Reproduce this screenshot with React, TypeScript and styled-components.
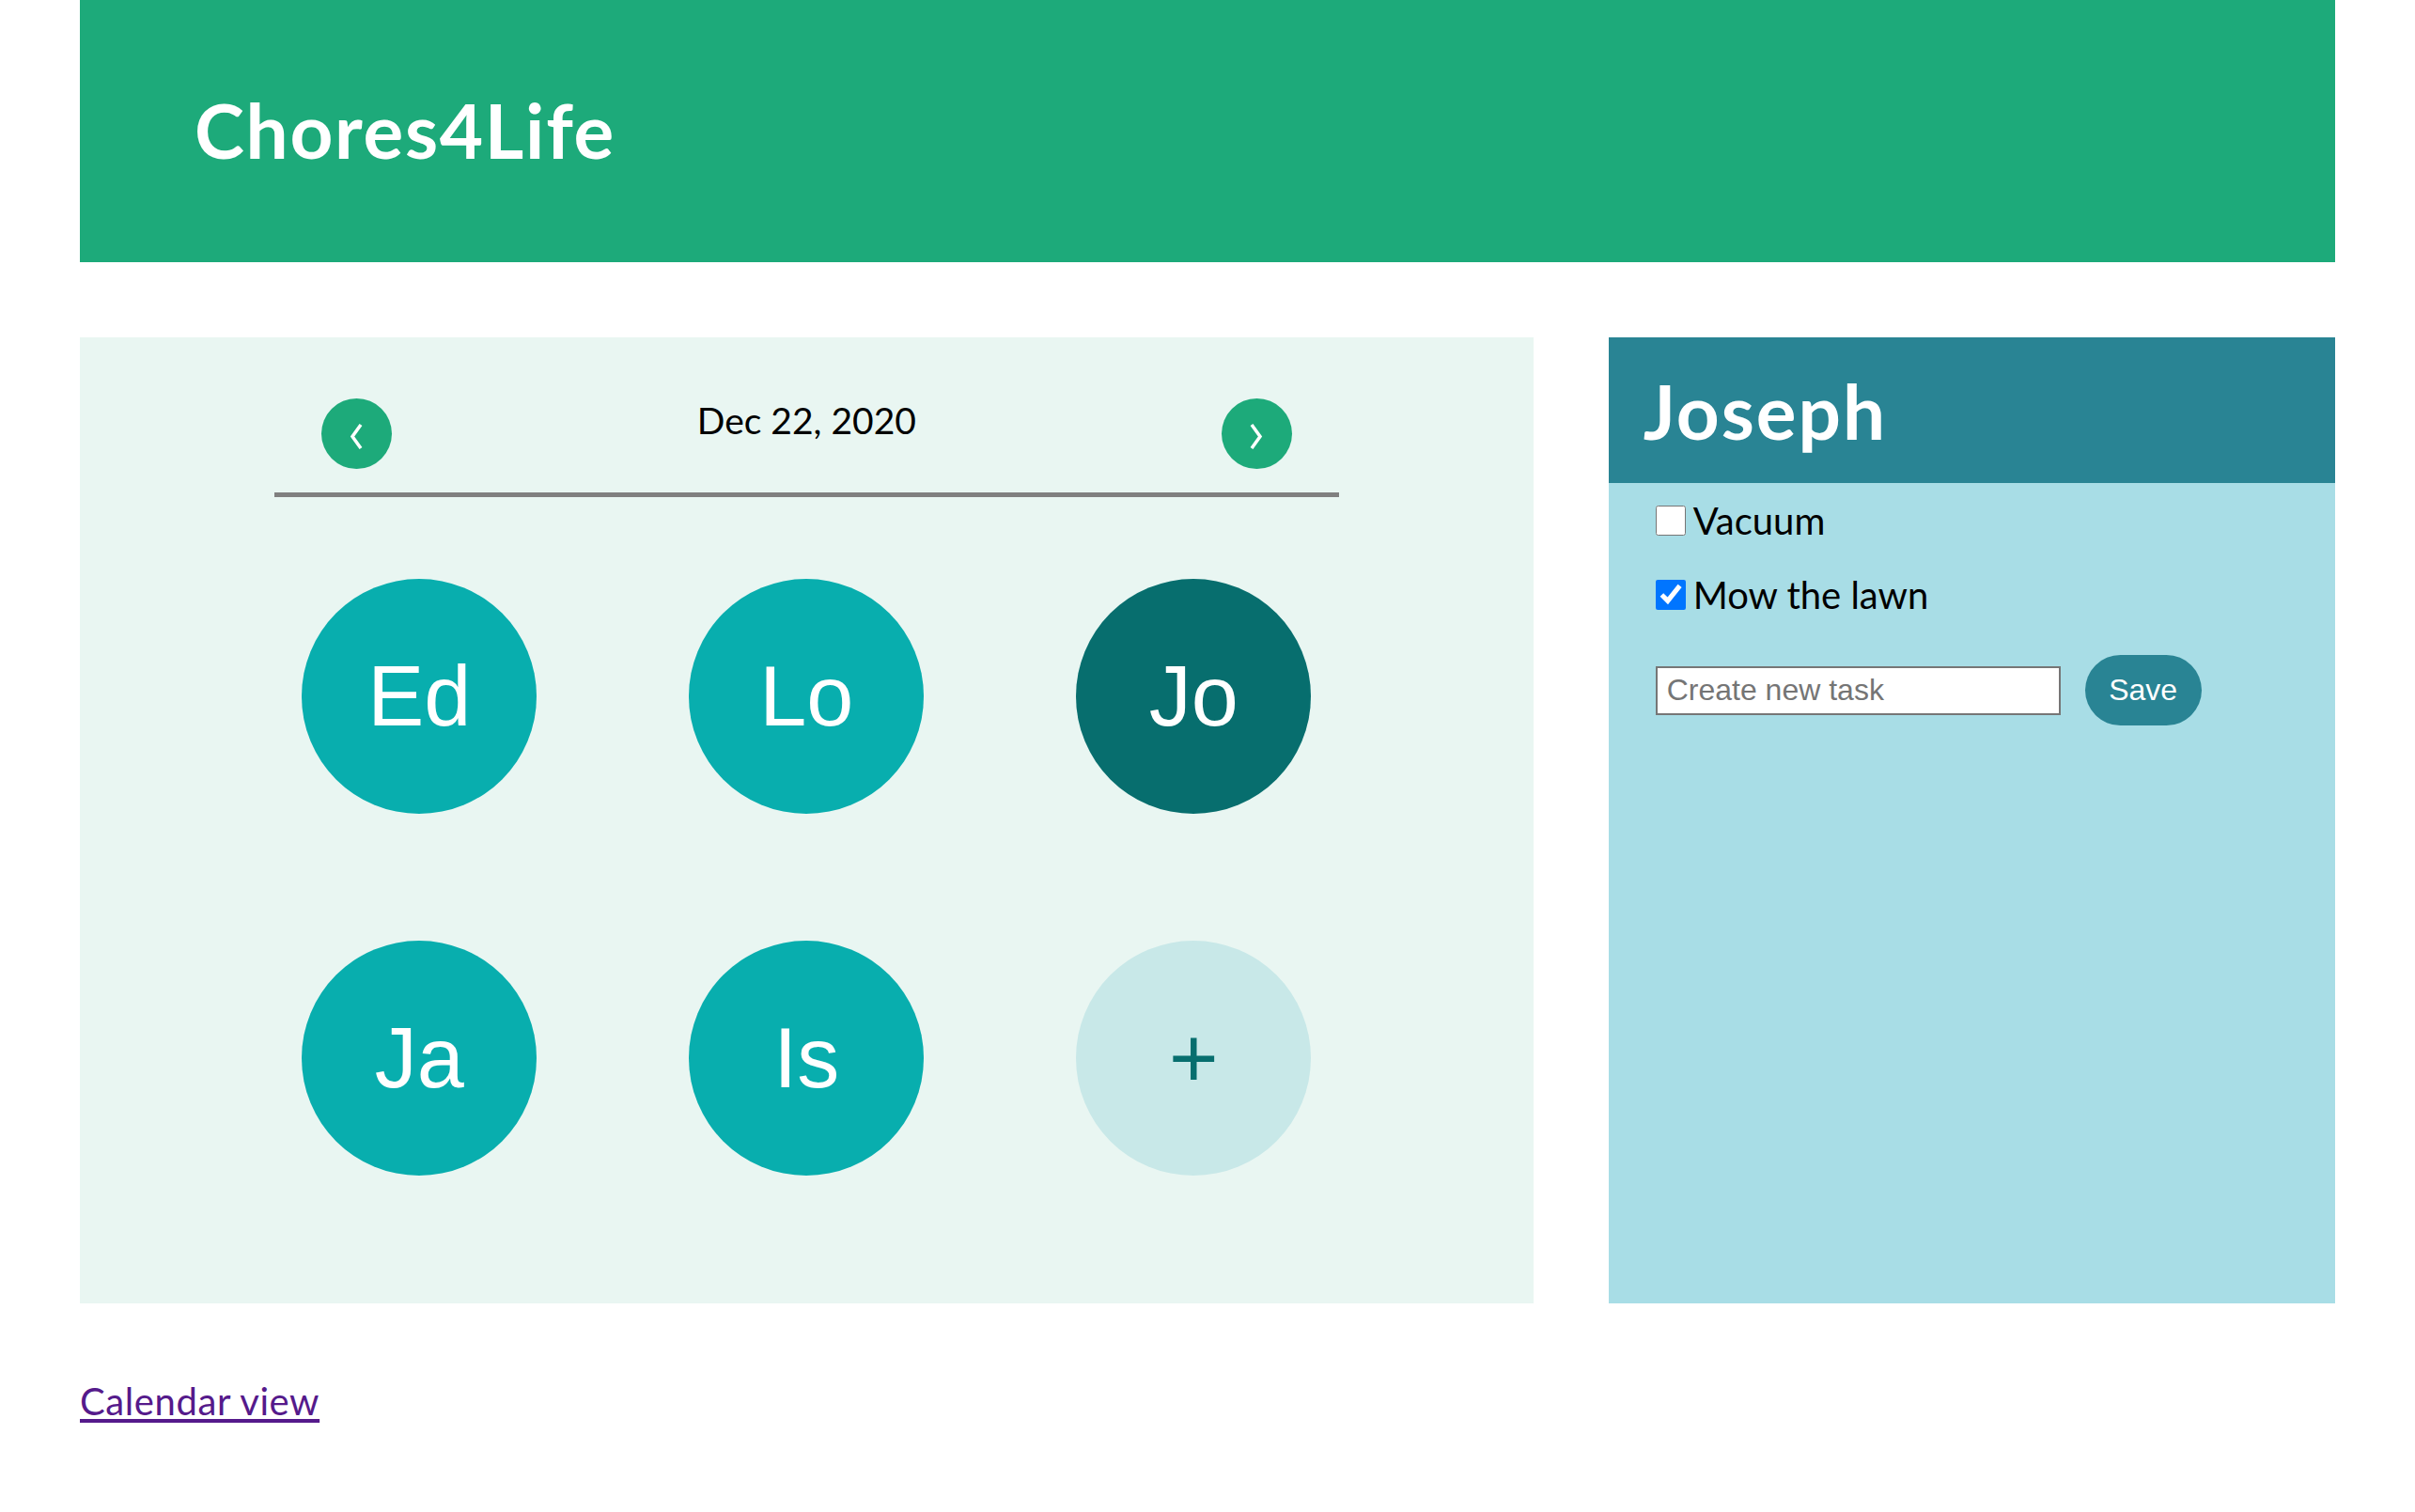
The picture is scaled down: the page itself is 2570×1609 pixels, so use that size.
import React from 'react';
import styled, { createGlobalStyle } from 'styled-components';

const GlobalStyle = createGlobalStyle`
  html, body { margin: 0; padding: 0; background: #ffffff; }
  body { font-family: "Trebuchet MS", Lato, "DejaVu Sans", sans-serif; color: #000; }
  * { box-sizing: border-box; }
`;

const Page = styled.div`
  width: 2400px;
  margin: 0 auto;
`;

const Header = styled.header`
  height: 279px;
  background: #1daa7a;
  display: flex;
  align-items: center;
  padding-left: 122px;
`;

const Title = styled.h1`
  margin: 0 0 4px;
  font-size: 80px;
  font-weight: 700;
  color: #ffffff;
  line-height: 1;
  letter-spacing: 1.7px;
`;

const Main = styled.main`
  margin-top: 80px;
  display: grid;
  grid-template-columns: 2fr 1fr;
  column-gap: 80px;
`;

const DayPanel = styled.section`
  background: #e9f6f2;
  padding: 65px 0 136px;
  display: flex;
  flex-direction: column;
  align-items: center;
`;

const DateNav = styled.div`
  width: 1133px;
  padding: 0 50px 25px;
  display: flex;
  justify-content: space-between;
  align-items: flex-start;
  border-bottom: 5px solid #808080;
`;

const NavButton = styled.button`
  width: 75px;
  height: 75px;
  border-radius: 50%;
  border: none;
  padding: 6px 0 0;
  background: #1daa7a;
  display: flex;
  align-items: center;
  justify-content: center;
  cursor: pointer;
`;

const DateText = styled.div`
  font-size: 39px;
  line-height: 1;
  margin-top: 4px;
`;

const AvatarGrid = styled.div`
  margin-top: 87px;
  display: grid;
  grid-template-columns: repeat(3, 250px);
  column-gap: 162px;
  row-gap: 135px;
`;

const Avatar = styled.div<{ $bg: string; $fg: string }>`
  width: 250px;
  height: 250px;
  border-radius: 50%;
  background: ${(p) => p.$bg};
  color: ${(p) => p.$fg};
  display: flex;
  align-items: center;
  justify-content: center;
  font-family: "Liberation Sans", Arial, sans-serif;
  font-size: 90px;
  line-height: 1;
  cursor: pointer;
`;

const PersonPanel = styled.section`
  background: #a8dde6;
`;

const PersonHeader = styled.div`
  height: 155px;
  background: #298494;
  display: flex;
  align-items: center;
  padding-left: 37px;
`;

const PersonName = styled.h2`
  margin: 0;
  font-size: 80px;
  font-weight: 700;
  color: #ffffff;
  line-height: 1;
  letter-spacing: 2px;
`;

const PersonBody = styled.div`
  padding: 0 50px;
`;

const TaskRow = styled.label`
  display: flex;
  align-items: center;
  height: 79px;
  font-size: 40px;
  line-height: 1;
  gap: 8px;
`;

const Check = styled.input`
  width: 32px;
  height: 32px;
  margin: 0;
  accent-color: #0075ff;
`;

const NewTaskRow = styled.form`
  margin-top: 25px;
  display: flex;
  align-items: center;
  gap: 26px;
`;

const TaskInput = styled.input`
  width: 431px;
  height: 52px;
  border: 2px solid #767676;
  background: #fff;
  padding: 0 10px;
  font-family: "Liberation Sans", Arial, sans-serif;
  font-size: 32px;
  &::placeholder { color: #757575; }
`;

const SaveButton = styled.button`
  width: 124px;
  height: 75px;
  border-radius: 38px;
  border: none;
  background: #298494;
  color: #ffffff;
  font-family: "Liberation Sans", Arial, sans-serif;
  font-size: 32px;
  cursor: pointer;
`;

const Footer = styled.div`
  margin-top: 80px;
  font-size: 40px;
`;

const CalendarLink = styled.a`
  color: #551a8b;
  text-decoration: underline;
  text-underline-offset: 4px;
  letter-spacing: 0.6px;
`;

const Chevron = ({ dir }: { dir: 'left' | 'right' }) => (
  <svg width="18" height="27" viewBox="0 0 18 27">
    <polyline
      points={dir === 'left' ? '14,1 5,13.5 14,26' : '4,1 13,13.5 4,26'}
      fill="none"
      stroke="#ffffff"
      strokeWidth="3.5"
    />
  </svg>
);

const people = [
  { initials: 'Ed', active: false },
  { initials: 'Lo', active: false },
  { initials: 'Jo', active: true },
  { initials: 'Ja', active: false },
  { initials: 'Is', active: false },
];

export default function App() {
  return (
    <>
      <GlobalStyle />
      <Page>
        <Header>
          <Title>Chores4Life</Title>
        </Header>
        <Main>
          <DayPanel>
            <DateNav>
              <NavButton aria-label="Previous day"><Chevron dir="left" /></NavButton>
              <DateText>Dec 22, 2020</DateText>
              <NavButton aria-label="Next day"><Chevron dir="right" /></NavButton>
            </DateNav>
            <AvatarGrid>
              {people.map((p) => (
                <Avatar key={p.initials} $bg={p.active ? '#076e6e' : '#08aeae'} $fg="#ffffff">
                  {p.initials}
                </Avatar>
              ))}
              <Avatar $bg="#c8e8e8" $fg="#076e6e">+</Avatar>
            </AvatarGrid>
          </DayPanel>
          <PersonPanel>
            <PersonHeader>
              <PersonName>Joseph</PersonName>
            </PersonHeader>
            <PersonBody>
              <TaskRow>
                <Check type="checkbox" />
                Vacuum
              </TaskRow>
              <TaskRow>
                <Check type="checkbox" defaultChecked />
                Mow the lawn
              </TaskRow>
              <NewTaskRow onSubmit={(e) => e.preventDefault()}>
                <TaskInput placeholder="Create new task" />
                <SaveButton type="submit">Save</SaveButton>
              </NewTaskRow>
            </PersonBody>
          </PersonPanel>
        </Main>
        <Footer>
          <CalendarLink href="#">Calendar view</CalendarLink>
        </Footer>
      </Page>
    </>
  );
}
